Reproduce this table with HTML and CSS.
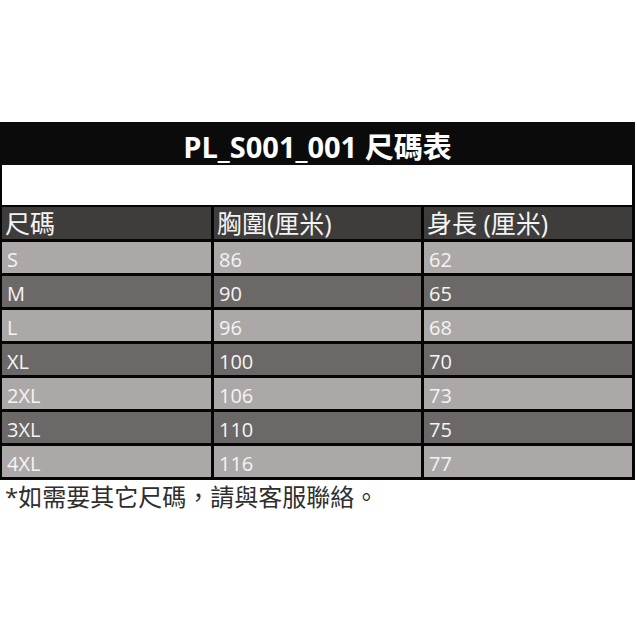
FILE: index.html
```html
<!DOCTYPE html>
<html lang="zh-Hant">
<head>
<meta charset="utf-8">
<title>PL_S001_001 尺碼表</title>
<link rel="stylesheet" href="styles.css">
</head>
<body>
<div class="page">
  <div class="chart">
    <div class="title">PL_S001_001 尺碼表</div>
    <div class="blank"></div>
    <div class="grid">
      <div class="cell head">尺碼</div>
      <div class="cell head">胸圍(厘米)</div>
      <div class="cell head">身長 (厘米)</div>

      <div class="cell light">S</div><div class="cell light">86</div><div class="cell light">62</div>
      <div class="cell dark">M</div><div class="cell dark">90</div><div class="cell dark">65</div>
      <div class="cell light">L</div><div class="cell light">96</div><div class="cell light">68</div>
      <div class="cell dark">XL</div><div class="cell dark">100</div><div class="cell dark">70</div>
      <div class="cell light">2XL</div><div class="cell light">106</div><div class="cell light">73</div>
      <div class="cell dark">3XL</div><div class="cell dark">110</div><div class="cell dark">75</div>
      <div class="cell light">4XL</div><div class="cell light">116</div><div class="cell light">77</div>
    </div>
  </div>
  <p class="note">*如需要其它尺碼，請與客服聯絡。</p>
</div>
</body>
</html>
```

FILE: styles.css
```css
html, body {
  margin: 0;
  padding: 0;
  background: #ffffff;
}

body {
  font-family: "Open Sans", "Noto Sans CJK TC", sans-serif;
}

.page {
  padding-top: 122px;
}

.chart {
  width: 635px;
  background: #050505;
  padding: 0 3px 3px 2px;
  box-sizing: border-box;
}

.title {
  height: 43px;
  display: flex;
  align-items: center;
  justify-content: center;
  color: #ffffff;
  font-weight: 700;
  font-size: 29px;
  background: #0b0b0b;
  margin: 0 -3px 0 -2px;
  padding-top: 2px;
  box-sizing: border-box;
}

.blank {
  height: 40px;
  background: #ffffff;
  margin-bottom: 2px;
}

.grid {
  display: grid;
  grid-template-columns: 209px 207px 208px;
  grid-template-rows: 32px repeat(7, 31px);
  gap: 3px;
}

.cell {
  display: flex;
  align-items: center;
  padding-left: 5px;
  color: #f4f4f4;
  font-size: 20px;
  white-space: nowrap;
}

.cell.head {
  background: #3f3c3c;
  font-size: 25px;
  line-height: 30px;
  padding-left: 3px;
}

.cell.light {
  background: #aca8a7;
  padding-top: 3px;
}

.cell.dark {
  background: #6c6867;
  padding-top: 3px;
}

.note {
  margin: 0;
  padding: 3px 0 0 5px;
  font-size: 24px;
  line-height: 28px;
  color: #2e2e2e;
}
```
